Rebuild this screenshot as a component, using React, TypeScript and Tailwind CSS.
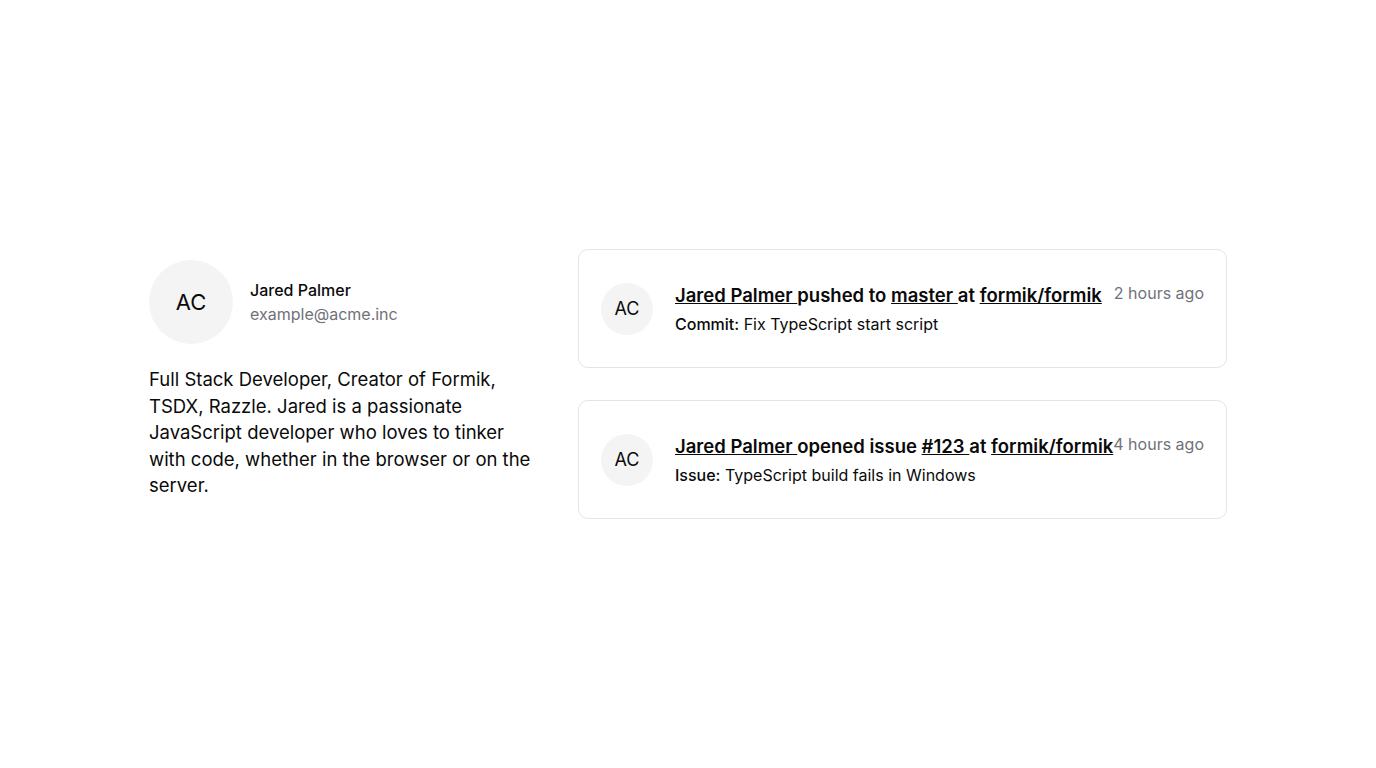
import React from "react";

interface Activity {
  time: string;
  label: string;
  detail: string;
  title: React.ReactNode;
}

const activities: Activity[] = [
  {
    time: "2 hours ago",
    label: "Commit:",
    detail: "Fix TypeScript start script",
    title: (
      <>
        <a href="#" className="underline">Jared Palmer </a>pushed to{" "}
        <a href="#" className="underline">master </a>at{" "}
        <a href="#" className="underline">formik/formik</a>
      </>
    ),
  },
  {
    time: "4 hours ago",
    label: "Issue:",
    detail: "TypeScript build fails in Windows",
    title: (
      <>
        <a href="#" className="underline">Jared Palmer </a>opened issue{" "}
        <a href="#" className="underline">#123 </a>at{" "}
        <a href="#" className="underline">formik/formik</a>
      </>
    ),
  },
];

export default function App() {
  return (
    <div
      className="min-h-screen flex items-center justify-center bg-white text-[#0a0a0a]"
      style={{ fontFamily: "Inter, 'Noto Sans', sans-serif" }}
    >
      <div className="w-[1078px] grid grid-cols-[385px_1fr] gap-[44px] items-start">
        {/* profile */}
        <div className="pt-[11px]">
          <div className="flex items-center gap-[17px]">
            <div className="w-[84px] h-[84px] rounded-full bg-[#f4f4f5] flex items-center justify-center text-[22px]">
              AC
            </div>
            <div className="text-base leading-6">
              <p className="font-medium">Jared Palmer</p>
              <p className="text-[#71717a]">example@acme.inc</p>
            </div>
          </div>
          <p className="mt-[22px] text-[18.5px] leading-[26.5px]">
            Full Stack Developer, Creator of Formik, TSDX, Razzle. Jared is a
            passionate JavaScript developer who loves to tinker with code,
            whether in the browser or on the server.
          </p>
        </div>

        {/* activity feed */}
        <div className="flex flex-col gap-8">
          {activities.map((a, i) => (
            <div
              key={i}
              className="border border-[#e4e4e7] rounded-[10px] px-[22px] py-[31px] flex items-center gap-[22px]"
            >
              <div className="w-[52px] h-[52px] shrink-0 rounded-full bg-[#f4f4f5] flex items-center justify-center text-[18px]">
                AC
              </div>
              <div className="flex-1">
                <div className="flex justify-between items-start">
                  <p className="text-[18.5px] leading-7 font-semibold">{a.title}</p>
                  <span className="shrink-0 text-base leading-6 text-[#71717a]">{a.time}</span>
                </div>
                <p className="mt-[3px] text-base leading-6">
                  <span className="font-medium">{a.label}</span> {a.detail}
                </p>
              </div>
            </div>
          ))}
        </div>
      </div>
    </div>
  );
}
